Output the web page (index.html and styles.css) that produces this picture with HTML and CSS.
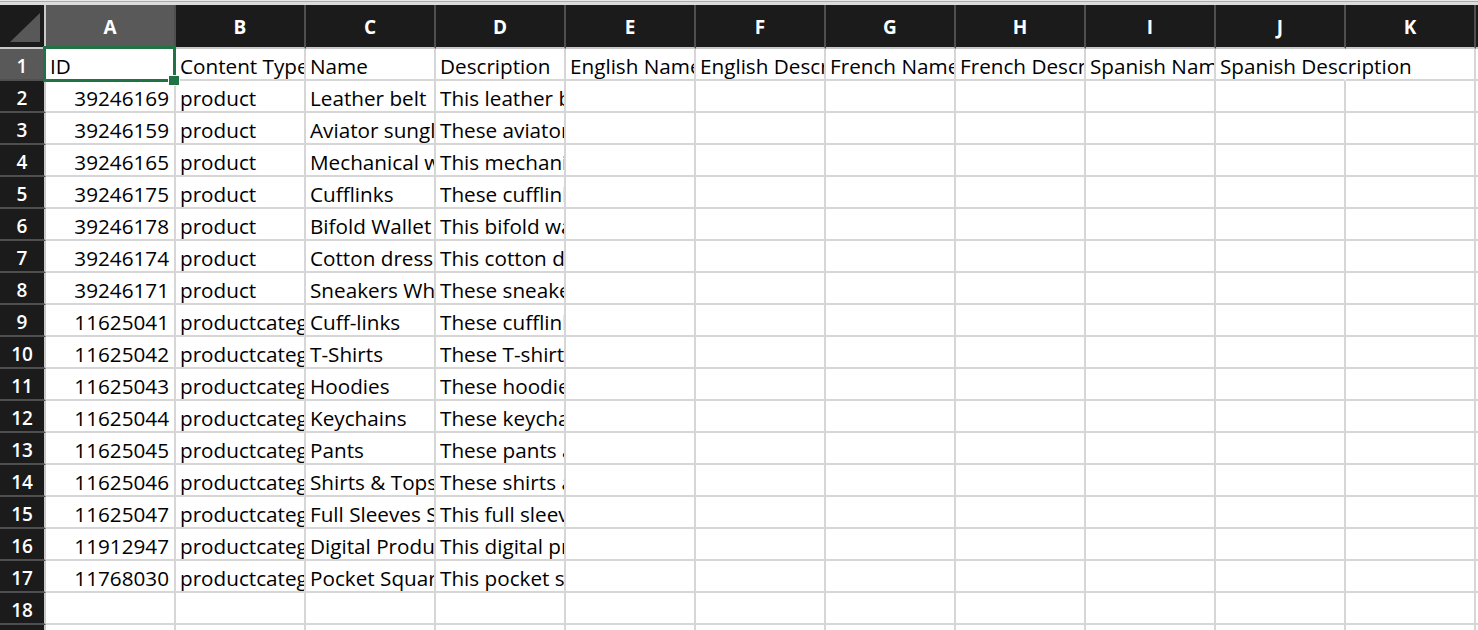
FILE: index.html
```html
<!DOCTYPE html>
<html lang="en">
<head>
  <meta charset="UTF-8" />
  <title>products.xlsx</title>
  <link rel="stylesheet" href="styles.css">
</head>
<body>
  <div class="topbar"></div>

  <div class="sheet" id="sheet">
    <div class="corner"><span class="corner-tri"></span></div>
    <!-- column headers and rows are filled in below -->
  </div>

  <script>
    const cols = ['A', 'B', 'C', 'D', 'E', 'F', 'G', 'H', 'I', 'J', 'K'];
    const header = ['ID', 'Content Type', 'Name', 'Description', 'English Name', 'English Description',
      'French Name', 'French Description', 'Spanish Name', 'Spanish Description'];
    const rows = [
      ['39246169', 'product', 'Leather belt', 'This leather b'],
      ['39246159', 'product', 'Aviator sungla', 'These aviator'],
      ['39246165', 'product', 'Mechanical wa', 'This mechani'],
      ['39246175', 'product', 'Cufflinks', 'These cufflink'],
      ['39246178', 'product', 'Bifold Wallet', 'This bifold wa'],
      ['39246174', 'product', 'Cotton dress', 'This cotton dr'],
      ['39246171', 'product', 'Sneakers Whi', 'These sneake'],
      ['11625041', 'productcateg', 'Cuff-links', 'These cufflink'],
      ['11625042', 'productcateg', 'T-Shirts', 'These T-shirts'],
      ['11625043', 'productcateg', 'Hoodies', 'These hoodie'],
      ['11625044', 'productcateg', 'Keychains', 'These keycha'],
      ['11625045', 'productcateg', 'Pants', 'These pants a'],
      ['11625046', 'productcateg', 'Shirts & Tops', 'These shirts a'],
      ['11625047', 'productcateg', 'Full Sleeves S', 'This full sleev'],
      ['11912947', 'productcateg', 'Digital Produ', 'This digital pr'],
      ['11768030', 'productcateg', 'Pocket Squar', 'This pocket s']
    ];

    const sheet = document.getElementById('sheet');

    function cell(cls, text) {
      const d = document.createElement('div');
      d.className = cls;
      if (text) d.textContent = text;
      sheet.appendChild(d);
      return d;
    }

    cols.forEach((c, i) => cell('col-head' + (i === 0 ? ' active' : ''), c));
    cell('col-head edge', '');

    const data = [header].concat(rows, [[]], [[]]);
    data.forEach((row, r) => {
      cell('row-head' + (r === 0 ? ' active' : ''), String(r + 1));
      cols.forEach((c, i) => {
        let cls = 'cell';
        if (r > 0 && i === 0) cls += ' num';
        if (r === 0 && i === 0) cls += ' selected';
        if (r === 0 && i === 9) cls += ' spill';
        cell(cls, row[i] || '');
      });
      cell('cell edge', '');
    });
  </script>
</body>
</html>
```

FILE: styles.css
```css
* {
  box-sizing: border-box;
}

html, body {
  margin: 0;
  padding: 0;
  height: 100%;
  overflow: hidden;
  background-color: #fff;
  font-family: 'Open Sans', 'Liberation Sans', sans-serif;
}

.topbar {
  height: 5px;
  background: linear-gradient(#e6e6e6 0 1px, #ababab 1px 2px, #dcdcdc 2px);
}

.sheet {
  display: grid;
  grid-template-columns: 46px repeat(11, 130px) 2px;
  grid-template-rows: 44px;
  grid-auto-rows: 32px;
  width: 1478px;
  overflow: hidden;
}

.corner {
  position: relative;
  background-color: #1b1b1b;
  border-right: 2px solid #c9c9c9;
  border-bottom: 2px solid #c9c9c9;
}

.corner-tri {
  position: absolute;
  left: 10px;
  bottom: 5px;
  width: 30px;
  height: 29px;
  background-color: #585858;
  clip-path: polygon(0 100%, 100% 0, 100% 100%);
}

.col-head {
  background-color: #1b1b1b;
  color: #fff;
  font-weight: bold;
  font-size: 19px;
  text-align: center;
  padding-top: 9px;
  border-right: 2px solid #4f4f4f;
  border-bottom: 2px solid #c9c9c9;
}

.row-head {
  background-color: #1b1b1b;
  color: #fff;
  font-weight: 600;
  font-size: 19px;
  text-align: center;
  line-height: 30px;
  padding-top: 2px;
  border-right: 2px solid #c9c9c9;
  border-bottom: 2px solid #4f4f4f;
}

.active {
  background-color: #595959;
}

.cell {
  font-size: 20.7px;
  line-height: 30px;
  padding: 2px 4px 0 4px;
  white-space: nowrap;
  overflow: hidden;
  color: #000;
  border-right: 2px solid #d6d6d6;
  border-bottom: 2px solid #d6d6d6;
}

.edge {
  border-right: none;
  padding: 0;
}

.num {
  text-align: right;
  padding-right: 5px;
}

.spill {
  overflow: visible;
  position: relative;
  z-index: 1;
  border-right-color: #fff;
}

.selected {
  position: relative;
  overflow: visible;
  z-index: 2;
}

.selected::before {
  content: "";
  position: absolute;
  left: -3px;
  top: -3px;
  right: -2px;
  bottom: -3px;
  border: 3px solid #217346;
}

.selected::after {
  content: "";
  position: absolute;
  right: -6px;
  bottom: -7px;
  width: 10px;
  height: 9px;
  background-color: #217346;
  border: 1px solid #fff;
}
```
